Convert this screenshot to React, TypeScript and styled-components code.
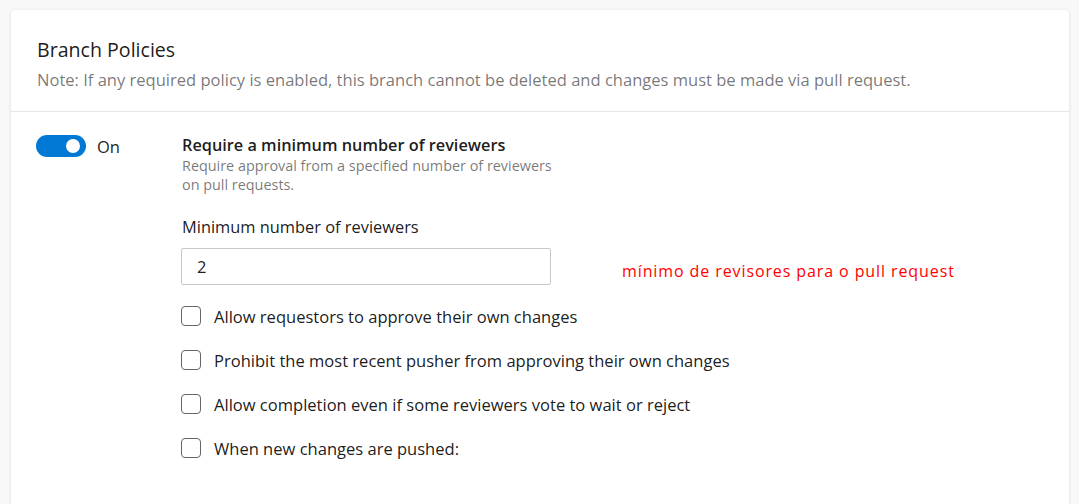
import React from "react";
import styled, { createGlobalStyle } from "styled-components";

const Global = createGlobalStyle`
  html, body { margin: 0; padding: 0; background: #f8f8f8; }
  body { font-family: "Open Sans", "Noto Sans", sans-serif; color: rgba(0,0,0,0.9); }
  * { box-sizing: border-box; }
`;

const Page = styled.div`
  padding: 10px 10px 0 11px;
  height: 504px;
  overflow: hidden;
`;

const Card = styled.section`
  background: #fff;
  border-radius: 4px 4px 0 0;
  box-shadow: 0 1.6px 3.6px rgba(0,0,0,0.12), 0 0.3px 0.9px rgba(0,0,0,0.1);
  min-height: 520px;
`;

const Header = styled.header`
  padding: 27px 26px 19px;
  border-bottom: 1px solid #e6e6e6;
  display: flex;
  flex-direction: column;
  gap: 6px;
`;

const Title = styled.h2`
  margin: 0;
  font-size: 19.6px;
  font-weight: 400;
  line-height: 26px;
  color: rgba(0,0,0,0.9);
`;

const Note = styled.p`
  margin: 0;
  font-size: 16.55px;
  line-height: 22px;
  color: rgba(0,0,0,0.55);
  margin-bottom: 1px;
`;

const Body = styled.div`
  display: grid;
  grid-template-columns: 146px 1fr;
  padding: 23px 25px;
`;

const ToggleWrap = styled.label`
  display: flex;
  align-items: center;
  gap: 11px;
  height: 22px;
  font-size: 16.5px;
  color: rgba(0,0,0,0.9);
`;

const Track = styled.span<{ $on: boolean }>`
  position: relative;
  width: 50px;
  height: 22px;
  border-radius: 11px;
  background: ${(p) => (p.$on ? "#0078d4" : "#fff")};
  flex: none;
`;

const Knob = styled.span<{ $on: boolean }>`
  position: absolute;
  top: 4px;
  ${(p) => (p.$on ? "right: 6px;" : "left: 6px;")}
  width: 14px;
  height: 14px;
  border-radius: 50%;
  background: #fff;
`;

const Content = styled.div`
  display: flex;
  flex-direction: column;
`;

const PolicyTitle = styled.div`
  font-size: 16.3px;
  font-weight: 600;
  line-height: 22px;
  color: rgba(0,0,0,0.9);
  margin-top: -1px;
`;

const PolicyDesc = styled.div`
  font-size: 14.4px;
  line-height: 19px;
  color: rgba(0,0,0,0.55);
  width: 375px;
`;

const FieldLabel = styled.div`
  font-size: 16.4px;
  line-height: 22px;
  margin-top: 22px;
  color: rgba(0,0,0,0.9);
`;

const FieldRow = styled.div`
  display: flex;
  align-items: center;
  gap: 71px;
  margin-top: 10px;
`;

const Input = styled.input`
  width: 370px;
  height: 37px;
  margin-left: -1px;
  border: 1px solid #c8c8c8;
  border-radius: 2px;
  padding: 0 15px;
  font-family: inherit;
  font-size: 16.5px;
  color: rgba(0,0,0,0.9);
  outline: none;
`;

const Annotation = styled.span`
  font-size: 16px;
  color: #f00;
  letter-spacing: 0.9px;
  margin-top: 9px;
`;

const Checks = styled.div`
  display: flex;
  flex-direction: column;
  gap: 24px;
  margin-top: 21px;
`;

const CheckRow = styled.label`
  display: flex;
  align-items: center;
  gap: 13px;
  height: 20px;
  margin-left: -1px;
  font-size: 16.55px;
  color: rgba(0,0,0,0.9);
`;

const Box = styled.span`
  width: 20px;
  height: 20px;
  border: 1px solid #666;
  border-radius: 4px;
  background: #fff;
  flex: none;
`;

const options = [
  "Allow requestors to approve their own changes",
  "Prohibit the most recent pusher from approving their own changes",
  "Allow completion even if some reviewers vote to wait or reject",
  "When new changes are pushed:",
];

export default function App() {
  return (
    <>
      <Global />
      <Page>
        <Card>
          <Header>
            <Title>Branch Policies</Title>
            <Note>
              Note: If any required policy is enabled, this branch cannot be deleted and changes must be made via pull request.
            </Note>
          </Header>
          <Body>
            <ToggleWrap>
              <Track $on>
                <Knob $on />
              </Track>
              On
            </ToggleWrap>
            <Content>
              <PolicyTitle>Require a minimum number of reviewers</PolicyTitle>
              <PolicyDesc>
                Require approval from a specified number of reviewers on pull requests.
              </PolicyDesc>
              <FieldLabel>Minimum number of reviewers</FieldLabel>
              <FieldRow>
                <Input defaultValue="2" />
                <Annotation>mínimo de revisores para o pull request</Annotation>
              </FieldRow>
              <Checks>
                {options.map((o) => (
                  <CheckRow key={o}>
                    <Box />
                    {o}
                  </CheckRow>
                ))}
              </Checks>
            </Content>
          </Body>
        </Card>
      </Page>
    </>
  );
}
